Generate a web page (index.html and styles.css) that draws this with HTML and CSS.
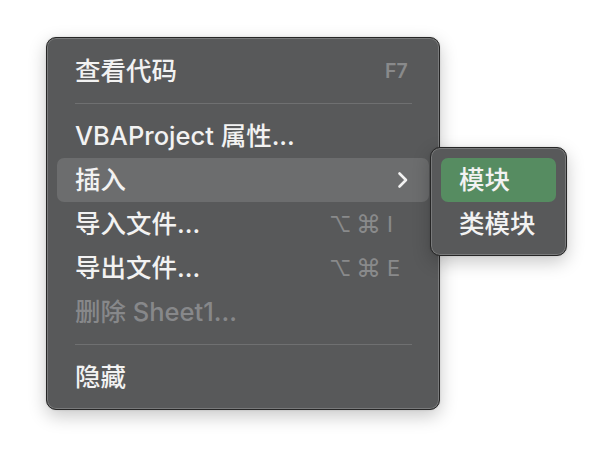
FILE: index.html
```html
<!DOCTYPE html>
<html lang="zh-CN">
<head>
<meta charset="utf-8">
<link rel="stylesheet" href="styles.css">
</head>
<body>
<div class="stage">
  <div class="menu">
    <div class="item first"><span class="label">查看代码</span><span class="key"><span class="k f7">F7</span></span></div>
    <div class="sep"></div>
    <div class="item"><span class="label">VBAProject 属性...</span></div>
    <div class="item active"><span class="label">插入</span>
      <svg class="chev" width="12" height="18" viewBox="0 0 12 18"><path d="M2.5 2.5 L9 9 L2.5 15.5" fill="none" stroke="#f2f2f2" stroke-width="2.6" stroke-linecap="round" stroke-linejoin="round"/></svg>
    </div>
    <div class="item"><span class="label">导入文件...</span><span class="key"><span class="mods"><span class="opt">⌥</span><span class="cmd">⌘</span></span><span class="k">I</span></span></div>
    <div class="item"><span class="label">导出文件...</span><span class="key"><span class="mods"><span class="opt">⌥</span><span class="cmd">⌘</span></span><span class="k">E</span></span></div>
    <div class="item disabled"><span class="label">删除 Sheet1...</span></div>
    <div class="sep"></div>
    <div class="item"><span class="label">隐藏</span></div>
  </div>
  <div class="submenu">
    <div class="item sel"><span class="label">模块</span></div>
    <div class="item"><span class="label">类模块</span></div>
  </div>
</div>
</body>
</html>
```
FILE: styles.css
```css
html, body {
  margin: 0;
  padding: 0;
  background: #ffffff;
}
body {
  font-family: Inter, "Noto Sans CJK SC", sans-serif;
  -webkit-font-smoothing: antialiased;
}
.stage {
  position: relative;
  width: 612px;
  height: 464px;
  padding: 37px 0 0 46px;
  box-sizing: border-box;
}
.menu, .submenu {
  background: #58595a;
  border: 1px solid #262626;
  border-radius: 10px;
  box-shadow: inset 0 0 0 1px rgba(255,255,255,0.2), 0 6px 18px rgba(0,0,0,0.22), 0 0 2px rgba(0,0,0,0.15);
  box-sizing: border-box;
}
.menu {
  width: 394px;
  height: 373px;
  padding: 11px 10px 9px;
}
.item {
  height: 44px;
  display: flex;
  align-items: center;
  justify-content: space-between;
  padding: 0 22px 0 18px;
  border-radius: 7px;
  color: #f2f2f2;
  font-size: 25.5px;
  font-weight: 500;
  line-height: 44px;
}
.label {
  white-space: nowrap;
}
.key {
  display: flex;
  align-items: center;
  color: #898a8b;
  font-size: 22px;
  font-weight: 400;
}
.mods {
  display: flex;
  align-items: center;
  margin-right: 9px;
}
.opt {
  font-size: 22px;
  width: 27px;
}
.cmd {
  font-size: 25px;
  font-weight: 400;
  width: 22px;
  text-align: center;
  overflow: visible;
}
.k {
  width: 20px;
  text-align: left;
}
.f7 {
  font-size: 19.5px;
  font-weight: 600;
  width: 22px;
}
.active {
  background: #6c6d6e;
}
.chev {
  margin-right: -2px;
}
.disabled {
  color: #87888a;
}
.sep {
  height: 21px;
  display: flex;
  align-items: center;
  padding: 0 17px 0 18px;
}
.sep::before {
  content: "";
  flex: 1;
  height: 1px;
  background: #6f7071;
}
.submenu {
  position: absolute;
  left: 430px;
  top: 147px;
  width: 137px;
  height: 109px;
  padding: 10px;
}
.submenu .item {
  padding: 0 10px 0 18px;
}
.submenu .sel {
  background: #568c61;
}
```
